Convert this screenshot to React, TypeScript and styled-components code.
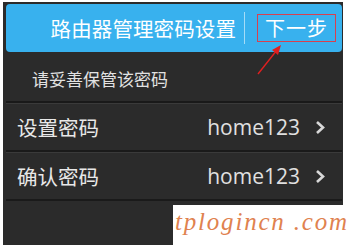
import React from 'react';
import styled, { createGlobalStyle } from 'styled-components';

const Global = createGlobalStyle`
	html, body {
		margin: 0;
		padding: 0;
		background: #ffffff;
	}
	body {
		font-family: "Noto Sans CJK SC", "Noto Sans", sans-serif;
	}
`;

const Page = styled.div`
	width: 349px;
	height: 245px;
	padding: 2px 6px 0 3px;
	box-sizing: border-box;
	position: relative;
	overflow: hidden;
`;

const Panel = styled.div`
	height: 243px;
	background: #2b2b2b;
	padding: 2px 1px 0 3px;
	box-sizing: border-box;
	display: flex;
	flex-direction: column;
`;

const Header = styled.div`
	height: 48px;
	background: #38b1ee;
	border-radius: 4px;
	display: flex;
	align-items: center;
	justify-content: flex-end;
	padding-right: 6px;
	color: #ffffff;
`;

const Title = styled.span`
	font-size: 20.5px;
	letter-spacing: 0.1px;
	padding-right: 8px;
`;

const Separator = styled.div`
	width: 1px;
	height: 32px;
	background: rgba(255, 255, 255, 0.55);
	margin-right: 12px;
`;

const NextButton = styled.span`
	font-size: 20px;
	border: 1px solid #d8404e;
	padding: 0 7px;
	line-height: 26px;
	letter-spacing: 1px;
`;

const Hint = styled.div`
	height: 51px;
	display: flex;
	align-items: center;
	padding-left: 26px;
	padding-top: 4px;
	box-sizing: border-box;
	font-size: 17px;
	color: #e2e2e2;
	border-bottom: 2px solid #191919;
`;

const Row = styled.div`
	height: 49px;
	display: flex;
	align-items: center;
	padding: 0 17px 0 11px;
	color: #e8e8e8;
	border-top: 1px solid #3a3a3a;
	border-bottom: 2px solid #1a1a1a;
	box-sizing: border-box;
`;

const Label = styled.span`
	font-size: 20.5px;
	flex: 1;
`;

const Value = styled.span`
	font-size: 21px;
	font-family: "Open Sans", "Noto Sans", sans-serif;
	color: #e0e0e0;
	margin-right: 15px;
`;

const Chevron = styled.svg`
	width: 10px;
	height: 15px;
`;

const Arrow = styled.svg`
	position: absolute;
	left: 255px;
	top: 42px;
	width: 30px;
	height: 34px;
`;

const Watermark = styled.div`
	position: absolute;
	left: 173px;
	top: 205px;
	width: 176px;
	height: 40px;
	background: #ffffff;
	color: #e0824f;
	font-family: "Liberation Serif", serif;
	font-style: italic;
	font-size: 25px;
	letter-spacing: 1.8px;
	padding-left: 2px;
	line-height: 34px;
	box-sizing: border-box;
	white-space: pre;
`;

const rows = [
	{ label: '设置密码', value: 'home123' },
	{ label: '确认密码', value: 'home123' },
];

export default function App() {
	return (
		<>
			<Global />
			<Page>
				<Panel>
					<Header>
						<Title>路由器管理密码设置</Title>
						<Separator />
						<NextButton>下一步</NextButton>
					</Header>
					<Hint>请妥善保管该密码</Hint>
					{rows.map((r) => (
						<Row key={r.label}>
							<Label>{r.label}</Label>
							<Value>{r.value}</Value>
							<Chevron viewBox="0 0 10 15">
								<path d="M2 2 L8 7.5 L2 13" fill="none" stroke="#d8d8d8" strokeWidth="2.6" />
							</Chevron>
						</Row>
					))}
				</Panel>
				<Arrow viewBox="0 0 30 34">
					<path d="M3 32 L22 8" stroke="#e02020" strokeWidth="1.4" />
					<path d="M26 3 L17 8 L23 13 Z" fill="#e02020" />
				</Arrow>
				<Watermark>tplogincn .com</Watermark>
			</Page>
		</>
	);
}
